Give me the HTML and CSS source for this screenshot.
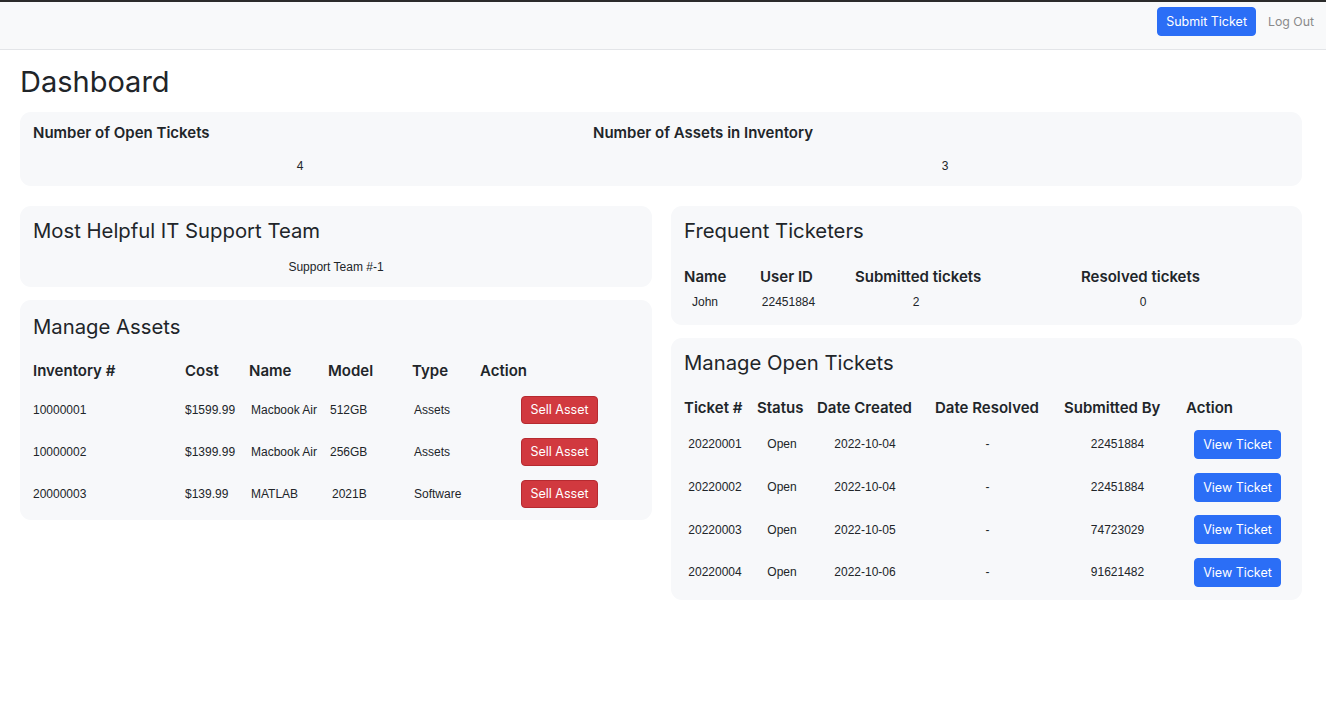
FILE: index.html
```html
<!DOCTYPE html>
<html lang="en">
<head>
<meta charset="utf-8">
<title>Dashboard</title>
<link rel="stylesheet" href="styles.css">
</head>
<body>
<nav class="navbar">
  <button class="btn btn-blue btn-nav">Submit Ticket</button>
  <a class="nav-link" href="#">Log Out</a>
</nav>
<main class="page">
  <h1 class="title">Dashboard</h1>
  <section class="card summary">
    <table class="tbl summary-tbl">
      <thead>
        <tr><th class="s1">Number of Open Tickets</th><th class="s2">Number of Assets in Inventory</th></tr>
      </thead>
      <tbody>
        <tr><td class="s1">4</td><td class="s2">3</td></tr>
      </tbody>
    </table>
  </section>
  <div class="columns">
    <div class="col">
      <section class="card team">
        <h2 class="card-title">Most Helpful IT Support Team</h2>
        <p class="team-name">Support Team #-1</p>
      </section>
      <section class="card assets">
        <h2 class="card-title">Manage Assets</h2>
        <table class="tbl assets-tbl">
          <thead>
            <tr><th class="a1">Inventory #</th><th class="a2">Cost</th><th class="a3">Name</th><th class="a4">Model</th><th class="a5">Type</th><th class="a6">Action</th></tr>
          </thead>
          <tbody>
            <tr><td>10000001</td><td>$1599.99</td><td class="pad">Macbook Air</td><td class="pad">512GB</td><td class="pad">Assets</td><td class="act"><button class="btn btn-red">Sell Asset</button></td></tr>
            <tr><td>10000002</td><td>$1399.99</td><td class="pad">Macbook Air</td><td class="pad">256GB</td><td class="pad">Assets</td><td class="act"><button class="btn btn-red">Sell Asset</button></td></tr>
            <tr><td>20000003</td><td>$139.99</td><td class="pad">MATLAB</td><td class="pad2">2021B</td><td class="pad">Software</td><td class="act"><button class="btn btn-red">Sell Asset</button></td></tr>
          </tbody>
        </table>
      </section>
    </div>
    <div class="col">
      <section class="card freq">
        <h2 class="card-title">Frequent Ticketers</h2>
        <table class="tbl freq-tbl">
          <thead>
            <tr><th class="f1">Name</th><th class="f2">User ID</th><th class="f3">Submitted tickets</th><th class="f4">Resolved tickets</th></tr>
          </thead>
          <tbody>
            <tr><td class="f1">John</td><td class="f2">22451884</td><td class="f3">2</td><td class="f4">0</td></tr>
          </tbody>
        </table>
      </section>
      <section class="card tickets">
        <h2 class="card-title">Manage Open Tickets</h2>
        <table class="tbl tickets-tbl">
          <thead>
            <tr><th class="t1">Ticket #</th><th class="t2">Status</th><th class="t3">Date Created</th><th class="t4">Date Resolved</th><th class="t5">Submitted By</th><th class="t6">Action</th></tr>
          </thead>
          <tbody>
            <tr><td class="t1">20220001</td><td class="t2">Open</td><td class="t3">2022-10-04</td><td class="t4">-</td><td class="t5">22451884</td><td class="t6"><button class="btn btn-blue">View Ticket</button></td></tr>
            <tr><td class="t1">20220002</td><td class="t2">Open</td><td class="t3">2022-10-04</td><td class="t4">-</td><td class="t5">22451884</td><td class="t6"><button class="btn btn-blue">View Ticket</button></td></tr>
            <tr><td class="t1">20220003</td><td class="t2">Open</td><td class="t3">2022-10-05</td><td class="t4">-</td><td class="t5">74723029</td><td class="t6"><button class="btn btn-blue">View Ticket</button></td></tr>
            <tr><td class="t1">20220004</td><td class="t2">Open</td><td class="t3">2022-10-06</td><td class="t4">-</td><td class="t5">91621482</td><td class="t6"><button class="btn btn-blue">View Ticket</button></td></tr>
          </tbody>
        </table>
      </section>
    </div>
  </div>
</main>
</body>
</html>
```

FILE: styles.css
```css
* { box-sizing: border-box; }

html, body {
  margin: 0;
  padding: 0;
  background: #ffffff;
}

body {
  font-family: Inter, "Noto Sans", sans-serif;
  color: #212529;
  border-top: 2px solid #2b2b2b;
}

.navbar {
  height: 48px;
  background: #f8f9fa;
  border-bottom: 1px solid #e3e5e8;
  display: flex;
  align-items: flex-start;
  justify-content: flex-end;
  gap: 12px;
  padding: 5px 12px 0 0;
}

.btn {
  font-family: Inter, "Noto Sans", sans-serif;
  font-size: 12.5px;
  color: #ffffff;
  border-radius: 4px;
  border: 1px solid transparent;
  padding: 0 8px;
  height: 29px;
  line-height: 27px;
  cursor: pointer;
}

.btn-blue {
  background: #2b6ef6;
  border-color: #2b6ef6;
}

.btn-red {
  background: #d1393f;
  border-color: #b62a30;
  height: 28px;
  line-height: 26px;
}

.nav-link {
  font-size: 12.3px;
  color: #8a8a8a;
  text-decoration: none;
  line-height: 29px;
}

.page {
  padding: 0 24px 0 20px;
}

.title {
  font-size: 29px;
  font-weight: 400;
  line-height: 36px;
  margin: 14px 0 12px 0;
}

.card {
  background: #f7f8fa;
  border-radius: 11px;
  padding: 12px 13px 10px;
}

.card-title {
  font-size: 20.3px;
  font-weight: 400;
  line-height: 26px;
  margin: 0;
}

.tbl {
  border-collapse: collapse;
  table-layout: fixed;
  width: 100%;
}

.tbl th {
  font-size: 15px;
  font-weight: 600;
  text-align: left;
  padding: 0;
  height: 24px;
  line-height: 24px;
  white-space: nowrap;
}

.tbl td {
  font-family: "Liberation Sans", Arial, sans-serif;
  font-size: 12px;
  padding: 0;
  white-space: nowrap;
}

/* Summary */
.summary {
  padding: 9px 13px 0;
}

.summary-tbl td {
  height: 41px;
  text-align: center;
  vertical-align: middle;
}

.summary-tbl .s1 { width: 560px; }
.summary-tbl td.s1 { padding-right: 26px; }
.summary-tbl td.s2 { padding-left: 8px; }

/* Columns */
.columns {
  display: grid;
  grid-template-columns: 632px 1fr;
  gap: 19px;
  margin-top: 20px;
}

.col {
  display: flex;
  flex-direction: column;
  gap: 13px;
}

.team {
  padding-bottom: 8px;
}

.team-name {
  margin: 11px 0 0;
  font-family: "Liberation Sans", Arial, sans-serif;
  font-size: 12px;
  line-height: 24px;
  text-align: center;
}

/* Assets */
.assets {
  padding: 14px 13px 5px;
}

.assets-tbl {
  margin-top: 19px;
}

.assets-tbl thead th {
  padding-bottom: 6px;
  height: 30px;
}

.assets-tbl td {
  height: 42px;
  vertical-align: middle;
}

.assets-tbl td.pad { padding-left: 2px; }
.assets-tbl td.pad2 { padding-left: 4px; }
.assets-tbl td.act { text-align: center; }

.a1 { width: 152px; }
.a2 { width: 64px; }
.a3 { width: 79px; }
.a4 { width: 84px; }
.a5 { width: 68px; }

/* Frequent */
.freq-tbl {
  margin-top: 20px;
}

.freq-tbl th {
  padding-top: 1px;
}

.freq-tbl td {
  height: 26px;
  text-align: center;
  vertical-align: middle;
}

.freq-tbl .f1 { width: 76px; padding-right: 34px; }
.freq-tbl .f2 { width: 95px; padding-right: 38px; }
.freq-tbl .f3 { width: 226px; padding-right: 104px; }
.freq-tbl .f4 { padding-right: 84px; }
.freq-tbl th.f1, .freq-tbl th.f2, .freq-tbl th.f3, .freq-tbl th.f4 { padding-right: 0; }

/* Tickets */
.tickets {
  padding: 12px 13px 6px;
}

.tickets-tbl {
  margin-top: 20px;
}

.tickets-tbl thead th {
  padding-bottom: 3px;
  height: 27px;
}

.tickets-tbl td {
  height: 42.7px;
  text-align: center;
  vertical-align: middle;
}

.tickets-tbl .t1 { width: 73px; padding-right: 11px; }
.tickets-tbl .t2 { width: 60px; padding-right: 10px; }
.tickets-tbl .t3 { width: 118px; padding-right: 22px; }
.tickets-tbl .t4 { width: 129px; padding-right: 24px; }
.tickets-tbl .t5 { width: 122px; padding-right: 15px; }
.tickets-tbl th.t1, .tickets-tbl th.t2, .tickets-tbl th.t3,
.tickets-tbl th.t4, .tickets-tbl th.t5 { padding-right: 0; }
```
